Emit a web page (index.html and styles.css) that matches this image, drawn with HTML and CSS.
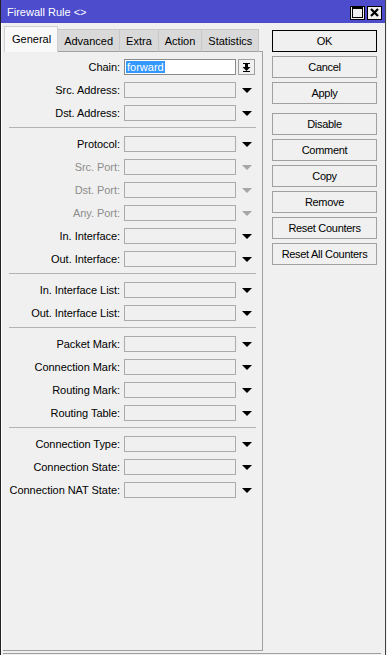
FILE: index.html
```html
<!DOCTYPE html>
<html>
<head>
<meta charset="utf-8">
<link rel="stylesheet" href="styles.css">
</head>
<body>
<div class="window">
  <div class="titlebar">
    <span class="title">Firewall Rule &lt;&gt;</span>
    <div class="tb-buttons">
      <span class="tb-btn"><svg width="11" height="11" viewBox="0 0 11 11"><rect x="0.5" y="0.5" width="10" height="10" fill="none" stroke="#000"/><rect x="0" y="0" width="11" height="2" fill="#000"/></svg></span>
      <span class="tb-btn"><svg width="9" height="9" viewBox="0 0 9 9"><path d="M1 1L8 8M8 1L1 8" stroke="#000" stroke-width="2.2"/></svg></span>
    </div>
  </div>
  <div class="main">
    <div class="left">
      <div class="tabs">
        <span class="tab active">General</span>
        <span class="tab">Advanced</span>
        <span class="tab">Extra</span>
        <span class="tab">Action</span>
        <span class="tab">Statistics</span>
        <span class="tab-fill"></span>
      </div>
      <div class="panel">
        <div class="row"><span class="label">Chain:</span><span class="field chain"><span class="sel">forward</span></span><span class="dd-btn"><svg width="9" height="9" viewBox="0 0 9 9"><rect x="1" y="0" width="7" height="1" fill="#000"/><rect x="3" y="1" width="3" height="3" fill="#000"/><path d="M0.5 4H8.5L4.5 8Z" fill="#000"/><rect x="1" y="8" width="7" height="1" fill="#000"/></svg></span></div>
        <div class="row"><span class="label">Src. Address:</span><span class="field"></span><span class="arrow"></span></div>
        <div class="row"><span class="label">Dst. Address:</span><span class="field"></span><span class="arrow"></span></div>
        <div class="sep"></div>
        <div class="row"><span class="label">Protocol:</span><span class="field"></span><span class="arrow"></span></div>
        <div class="row disabled"><span class="label">Src. Port:</span><span class="field"></span><span class="arrow"></span></div>
        <div class="row disabled"><span class="label">Dst. Port:</span><span class="field"></span><span class="arrow"></span></div>
        <div class="row disabled"><span class="label">Any. Port:</span><span class="field"></span><span class="arrow"></span></div>
        <div class="row"><span class="label">In. Interface:</span><span class="field"></span><span class="arrow"></span></div>
        <div class="row"><span class="label">Out. Interface:</span><span class="field"></span><span class="arrow"></span></div>
        <div class="sep"></div>
        <div class="row"><span class="label">In. Interface List:</span><span class="field"></span><span class="arrow"></span></div>
        <div class="row"><span class="label">Out. Interface List:</span><span class="field"></span><span class="arrow"></span></div>
        <div class="sep"></div>
        <div class="row"><span class="label">Packet Mark:</span><span class="field"></span><span class="arrow"></span></div>
        <div class="row"><span class="label">Connection Mark:</span><span class="field"></span><span class="arrow"></span></div>
        <div class="row"><span class="label">Routing Mark:</span><span class="field"></span><span class="arrow"></span></div>
        <div class="row"><span class="label">Routing Table:</span><span class="field"></span><span class="arrow"></span></div>
        <div class="sep"></div>
        <div class="row"><span class="label">Connection Type:</span><span class="field"></span><span class="arrow"></span></div>
        <div class="row"><span class="label">Connection State:</span><span class="field"></span><span class="arrow"></span></div>
        <div class="row"><span class="label">Connection NAT State:</span><span class="field"></span><span class="arrow"></span></div>
      </div>
    </div>
    <div class="buttons">
      <div class="btn default">OK</div>
      <div class="btn">Cancel</div>
      <div class="btn">Apply</div>
      <div class="btn group">Disable</div>
      <div class="btn">Comment</div>
      <div class="btn">Copy</div>
      <div class="btn">Remove</div>
      <div class="btn">Reset Counters</div>
      <div class="btn">Reset All Counters</div>
    </div>
  </div>
  <div class="statusbar"></div>
</div>
</body>
</html>
```

FILE: styles.css
```css
html, body {
  margin: 0;
  padding: 0;
  background: #f0f0f0;
}
body {
  font-family: "Liberation Sans", Arial, sans-serif;
  font-size: 11px;
  color: #000;
}
.window {
  width: 386px;
  height: 655px;
  box-sizing: border-box;
  border-left: 1px solid #222;
  border-right: 1px solid #444;
  background: #f0f0f0;
  display: flex;
  flex-direction: column;
}
.titlebar {
  height: 23px;
  flex: none;
  background: #4c4ccc;
  display: flex;
  align-items: center;
  justify-content: space-between;
  padding: 0 3px 0 6px;
}
.title {
  color: #fff;
  font-size: 11px;
}
.tb-buttons {
  display: flex;
  gap: 2px;
  margin-top: 2px;
}
.tb-btn {
  width: 15px;
  height: 14px;
  box-sizing: border-box;
  border: 1px solid #000;
  background: #f0f0f0;
  display: flex;
  align-items: center;
  justify-content: center;
}
.main {
  flex: none;
  height: 629px;
  display: flex;
  border-left: 1px solid #fff;
  padding-left: 1px;
}
.left {
  width: 260px;
  display: flex;
  flex-direction: column;
}
.tabs {
  height: 29px;
  display: flex;
  align-items: flex-end;
  flex: none;
}
.tab {
  height: 23px;
  box-sizing: border-box;
  background: #d9d9d9;
  border: 1px solid #c8c8c8;
  border-bottom-color: #a0a0a0;
  border-left: none;
  display: flex;
  align-items: center;
  justify-content: center;
  padding: 1px 6px 0;
}
.tab.active {
  height: 26px;
  background: #f9f9f9;
  border: 1px solid #d0d0d0;
  border-bottom: none;
  margin-left: 1px;
  padding: 0 6px 2px 7px;
}
.tab-fill {
  flex: 1;
  border-bottom: 1px solid #a0a0a0;
}
.panel {
  flex: 1;
  border-right: 1px solid #a0a0a0;
  border-bottom: 1px solid #a0a0a0;
  margin-bottom: 1px;
  padding-top: 3px;
}
.row {
  height: 23px;
  box-sizing: border-box;
  padding-top: 4px;
  display: flex;
  align-items: flex-start;
}
.label {
  width: 117px;
  text-align: right;
  line-height: 16px;
  letter-spacing: -0.05px;
  white-space: nowrap;
}
.field {
  margin-left: 4px;
  width: 112px;
  height: 16px;
  box-sizing: border-box;
  border: 1px solid #ababab;
  background: #f0f0f0;
  display: flex;
  align-items: center;
  padding-left: 1px;
}
.field.chain {
  background: #fff;
  border-color: #8a8a8a;
}
.sel {
  background: #3399ff;
  color: #fff;
  line-height: 12px;
  padding: 0 1px;
}
.arrow {
  width: 20px;
  height: 16px;
  display: flex;
  align-items: center;
  justify-content: center;
}
.arrow::before {
  content: "";
  display: block;
  width: 0;
  height: 0;
  border-left: 5px solid transparent;
  border-right: 5px solid transparent;
  border-top: 5px solid #000;
  margin-left: 1px;
}
.disabled .label {
  color: #8d8d8d;
}
.disabled .arrow::before {
  border-top-color: #a6a6a6;
}
.dd-btn {
  margin-left: 2px;
  width: 17px;
  height: 16px;
  box-sizing: border-box;
  border: 1px solid #a0a0a0;
  background: #f0f0f0;
  display: flex;
  align-items: center;
  justify-content: center;
}
.sep {
  height: 8px;
  box-sizing: border-box;
  margin: 0 6px;
  padding-top: 3px;
}
.sep::before {
  content: "";
  display: block;
  border-top: 1px solid #b4b4b4;
}
.buttons {
  margin-left: 9px;
  padding-top: 7px;
  display: flex;
  flex-direction: column;
  gap: 4px;
}
.btn {
  width: 105px;
  height: 22px;
  box-sizing: border-box;
  border: 1px solid #a0a0a0;
  background: #f0f0f0;
  display: flex;
  align-items: center;
  justify-content: center;
  letter-spacing: -0.3px;
}
.btn.default {
  border-color: #000;
}
.btn.group {
  margin-top: 5px;
}
.statusbar {
  flex: none;
  margin: 1px 4px 0 2px;
  border-top: 1px solid #a0a0a0;
  height: 1px;
}
```
